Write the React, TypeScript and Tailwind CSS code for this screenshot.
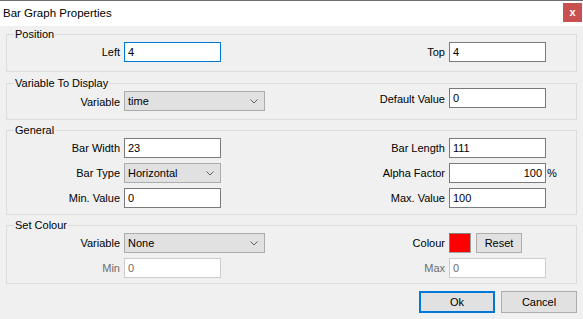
import React from 'react';

const Field = ({
  value,
  width = 'w-[97px]',
  focused,
  disabled,
  alignRight,
}: {
  value: string;
  width?: string;
  focused?: boolean;
  disabled?: boolean;
  alignRight?: boolean;
}) => (
  <input
    readOnly
    value={value}
    className={`h-[20px] ${width} border bg-white px-[3px] text-[11px] outline-none ${
      focused ? 'border-[#0078d7]' : disabled ? 'border-[#cccccc] text-[#6d6d6d]' : 'border-[#7a7a7a] text-black'
    } ${alignRight ? 'text-right' : 'text-left'}`}
  />
);

const Combo = ({ value, width }: { value: string; width: string }) => (
  <div className={`flex h-[20px] ${width} items-center justify-between border border-[#acacac] bg-[#e1e1e1] pl-[3px] pr-[6px]`}>
    <span>{value}</span>
    <svg width="8" height="5" viewBox="0 0 8 5">
      <polyline points="0.5,0.5 4,4 7.5,0.5" fill="none" stroke="#606060" strokeWidth="1" />
    </svg>
  </div>
);

const Group = ({
  title,
  className,
  children,
}: {
  title: string;
  className: string;
  children: React.ReactNode;
}) => (
  <fieldset className={`mx-[6px] border border-[#dcdcdc] px-0 ${className}`}>
    <legend className="ml-[7px] px-[1px] text-[11px] leading-[13px]">{title}</legend>
    {children}
  </fieldset>
);

const Row = ({
  left,
  right,
  leftDisabled,
  rightDisabled,
  suffix,
  className = '',
}: {
  left: [string, React.ReactNode];
  right: [string, React.ReactNode];
  leftDisabled?: boolean;
  rightDisabled?: boolean;
  suffix?: string;
  className?: string;
}) => (
  <div className={`flex items-center ${className}`}>
    <span className={`w-[117px] pr-[4px] text-right ${leftDisabled ? 'text-[#6d6d6d]' : ''}`}>{left[0]}</span>
    {left[1]}
    <span className={`flex-1 pr-[4px] text-right ${rightDisabled ? 'text-[#6d6d6d]' : ''}`}>{right[0]}</span>
    {right[1]}
    <span className="w-[30px] pl-[1px]">{suffix}</span>
  </div>
);

export default function App() {
  return (
    <div className="h-[319px] w-[583px] bg-[#f0f0f0] text-[11px] text-black" style={{ fontFamily: '"Liberation Sans", Arial, sans-serif' }}>
      <div className="flex h-[26px] items-center justify-between border-t border-[#6e6e6e] bg-white">
        <span className="pl-[3px] text-[11.5px]">Bar Graph Properties</span>
        <div className="mr-[1px] flex h-[19px] w-[19px] items-center justify-center self-start mt-[2px] bg-[#c75050] text-[11px] font-bold leading-none text-white">
          x
        </div>
      </div>

      <Group title="Position" className="mt-[2px] pb-[9px]">
        <Row
          className="mt-[1px] h-[20px]"
          left={['Left', <Field value="4" focused />]}
          right={['Top', <Field value="4" />]}
        />
      </Group>

      <Group title="Variable To Display" className="mt-[5px] pb-[8px]">
        <div className="-mt-[2px] flex items-start">
          <span className="mt-[6px] w-[117px] pr-[4px] text-right">Variable</span>
          <div className="mt-[3px]">
            <Combo value="time" width="w-[141px]" />
          </div>
          <span className="mt-[3px] flex-1 pr-[4px] text-right">Default Value</span>
          <Field value="0" />
          <span className="w-[30px]" />
        </div>
      </Group>

      <Group title="General" className="mt-[4px] pb-[6px]">
        <div className="mt-[1px] flex flex-col gap-[5px]">
          <Row left={['Bar Width', <Field value="23" />]} right={['Bar Length', <Field value="111" />]} />
          <Row
            left={['Bar Type', <Combo value="Horizontal" width="w-[97px]" />]}
            right={['Alpha Factor', <Field value="100" alignRight />]}
            suffix="%"
          />
          <Row left={['Min. Value', <Field value="0" />]} right={['Max. Value', <Field value="100" />]} />
        </div>
      </Group>

      <Group title="Set Colour" className="mt-[4px] pb-[5px]">
        <div className="mt-[1px] flex flex-col gap-[5px]">
          <div className="flex items-center">
            <span className="w-[117px] pr-[4px] text-right">Variable</span>
            <Combo value="None" width="w-[141px]" />
            <span className="flex-1 pr-[4px] text-right">Colour</span>
            <div className="h-[20px] w-[22px] border border-t-[#808080] border-l-[#808080] border-r-[#a0a0a0] border-b-[#a0a0a0] bg-[#ff0000]" />
            <button className="ml-[5px] h-[20px] w-[46px] border border-[#adadad] bg-[#e1e1e1] text-[11px]">Reset</button>
            <span className="w-[54px]" />
          </div>
          <Row
            leftDisabled
            rightDisabled
            left={['Min', <Field value="0" disabled />]}
            right={['Max', <Field value="0" disabled />]}
          />
        </div>
      </Group>

      <div className="mr-[6px] mt-[7px] flex justify-end gap-[6px]">
        <button className="h-[22px] w-[76px] border-2 border-[#0078d7] bg-[#e1e1e1] text-[11px]">Ok</button>
        <button className="h-[22px] w-[76px] border border-[#adadad] bg-[#e1e1e1] text-[11px]">Cancel</button>
      </div>
    </div>
  );
}
